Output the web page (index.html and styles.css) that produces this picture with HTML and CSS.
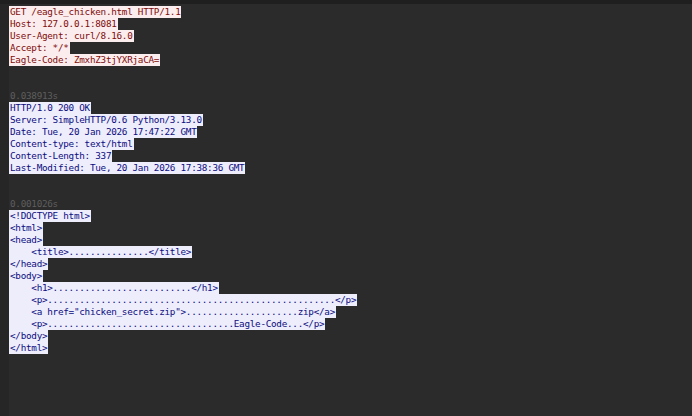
FILE: index.html
```html
<!DOCTYPE html>
<html>
<head>
<meta charset="utf-8">
<link rel="stylesheet" href="styles.css">
</head>
<body>
<div class="window">
  <div class="topbar"></div>
  <div class="main">
    <div class="gutter"></div>
    <div class="stream">
      <div class="ln cli">GET /eagle_chicken.html HTTP/1.1</div>
      <div class="ln cli">Host: 127.0.0.1:8081</div>
      <div class="ln cli">User-Agent: curl/8.16.0</div>
      <div class="ln cli">Accept: */*</div>
      <div class="ln cli">Eagle-Code: ZmxhZ3tjYXRjaCA=</div>
      <div class="ln blank"> </div>
      <div class="ln blank"> </div>
      <div class="ln ts">0.038913s</div>
      <div class="ln srv">HTTP/1.0 200 OK</div>
      <div class="ln srv">Server: SimpleHTTP/0.6 Python/3.13.0</div>
      <div class="ln srv">Date: Tue, 20 Jan 2026 17:47:22 GMT</div>
      <div class="ln srv">Content-type: text/html</div>
      <div class="ln srv">Content-Length: 337</div>
      <div class="ln srv">Last-Modified: Tue, 20 Jan 2026 17:38:36 GMT</div>
      <div class="ln blank"> </div>
      <div class="ln blank"> </div>
      <div class="ln ts">0.001026s</div>
      <div class="ln srv">&lt;!DOCTYPE html&gt;</div>
      <div class="ln srv">&lt;html&gt;</div>
      <div class="ln srv">&lt;head&gt;</div>
      <div class="ln srv">    &lt;title&gt;...............&lt;/title&gt;</div>
      <div class="ln srv">&lt;/head&gt;</div>
      <div class="ln srv">&lt;body&gt;</div>
      <div class="ln srv">    &lt;h1&gt;..........................&lt;/h1&gt;</div>
      <div class="ln srv">    &lt;p&gt;......................................................&lt;/p&gt;</div>
      <div class="ln srv">    &lt;a href="chicken_secret.zip"&gt;.....................zip&lt;/a&gt;</div>
      <div class="ln srv">    &lt;p&gt;...................................Eagle-Code...&lt;/p&gt;</div>
      <div class="ln srv">&lt;/body&gt;</div>
      <div class="ln srv">&lt;/html&gt;</div>
    </div>
  </div>
</div>
</body>
</html>
```
FILE: styles.css
```css
html, body {
  margin: 0;
  padding: 0;
  height: 100%;
  background: #2b2b2b;
}
.window {
  display: flex;
  flex-direction: column;
  height: 416px;
  width: 692px;
  overflow: hidden;
}
.topbar {
  height: 4px;
  background: #1f1f1f;
  flex: none;
}
.main {
  flex: 1;
  display: flex;
  flex-direction: row;
}
.gutter {
  width: 9px;
  background: #262626;
  flex: none;
}
.stream {
  flex: 1;
  padding-top: 2px;
  font-family: "DejaVu Sans Mono", "Liberation Mono", monospace;
  font-size: 9.3px;
  letter-spacing: -0.27px;
  line-height: 12px;
}
.ln {
  white-space: pre;
  height: 12px;
  width: max-content;
  padding-left: 1px;
  padding-right: 1px;
}
.cli {
  background: #fbeded;
  color: #7f0c0c;
}
.srv {
  background: #ededfb;
  color: #0c0c7f;
}
.ts {
  color: #5e5e5e;
}
```
